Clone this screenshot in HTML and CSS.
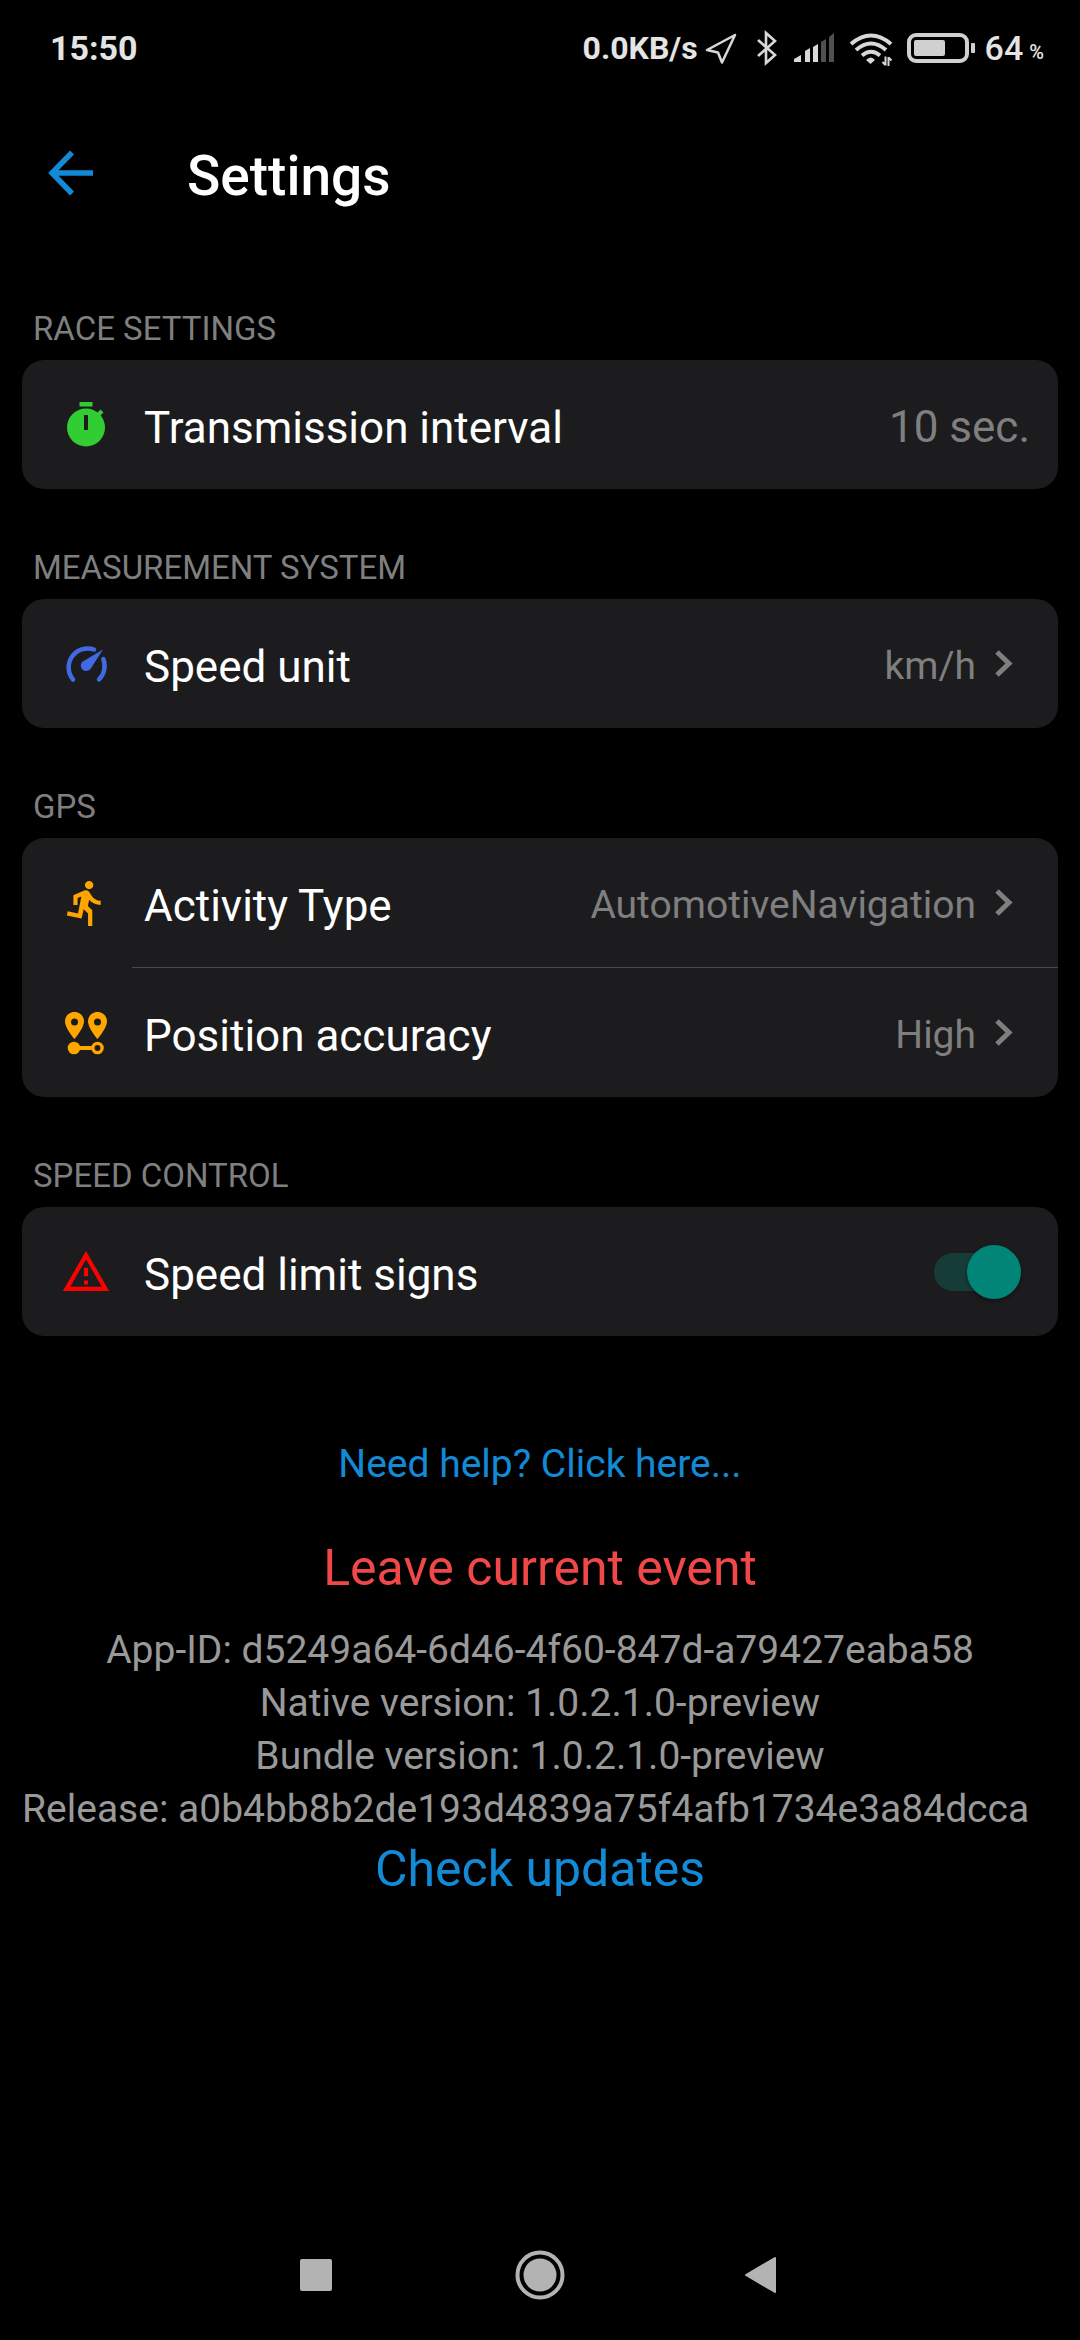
FILE: index.html
```html
<!DOCTYPE html>
<html lang="en">
<head>
<meta charset="utf-8">
<meta name="viewport" content="width=device-width, initial-scale=1">
<title>Settings</title>
<link rel="stylesheet" href="styles.css">
</head>
<body>
<div class="status-bar">
  <span class="status-time">15:50</span>
  <div class="status-icons">
    <span class="status-speed">0.0KB/s</span>
    <svg class="status-icon" width="34" height="36" viewBox="0 0 34 36" aria-hidden="true"><path d="M31 5 3 20l11 2.500 4 10z" fill="none" stroke="#d8d8d8" stroke-width="2.500" stroke-linejoin="round"/></svg>
    <svg class="status-icon bluetooth" width="24" height="36" viewBox="0 0 24 36" aria-hidden="true"><path d="M3 10l17 15-9 8V3l9 8L3 26" fill="none" stroke="#d8d8d8" stroke-width="2.600"/></svg>
    <svg class="status-icon" width="42" height="36" viewBox="0 0 42 36" aria-hidden="true"><path fill="#d8d8d8" d="M1 32v-3l7-4v7zM12 32V21l5-3v14zM20 32V17l5-3v18z"/><path fill="#505050" d="M28 32V12l5-3v23zM36 32V7l5-4v29z"/></svg>
    <svg class="status-icon" width="44" height="36" viewBox="0 0 44 36" aria-hidden="true"><g fill="none" stroke="#d8d8d8" stroke-width="4"><path d="M2 14Q22-3 42 14"/><path d="M7 20Q22 7 37 20"/><path d="M13 25.500Q22 18 31 25.500"/></g><path fill="#d8d8d8" d="M17 30q5-5 9 0l-4.500 4z"/><path d="M36.500 26.500v9M33.500 32l3 3M39.500 36v-9M39.500 27.500l3 3" fill="none" stroke="#d8d8d8" stroke-width="2"/></svg>
    <svg class="status-icon battery" width="70" height="36" viewBox="0 0 70 36" aria-hidden="true"><rect x="2" y="5" width="58" height="26" rx="7" fill="none" stroke="#d0d0d0" stroke-width="4"/><rect x="7" y="10" width="31" height="16" rx="2" fill="#d0d0d0"/><rect x="64" y="13" width="4" height="10" rx="1" fill="#d0d0d0"/></svg>
    <span class="status-charge">64</span>
    <span class="status-percent">%</span>
  </div>
</div>

<header class="app-bar">
  <button class="back-button" type="button" aria-label="Back">
    <svg width="48" height="48" viewBox="0 0 48 48" aria-hidden="true"><path d="M45 24H5M24 3.500 4 24l20 20.500" fill="none" stroke="#128ad6" stroke-width="5.500"/></svg>
  </button>
  <h1 class="app-title">Settings</h1>
</header>

<main class="content">
  <section class="group">
    <h2 class="group-title">RACE SETTINGS</h2>
    <div class="card">
      <div class="row">
        <svg class="row-icon" viewBox="0 0 48 48" aria-hidden="true"><g fill="#32cd32"><path d="M17.500 1h13v4.500h-13z"/><circle cx="24" cy="26.500" r="19"/></g><path d="M35 15l5-5" stroke="#32cd32" stroke-width="4"/><path d="M22 14h4v15h-4z" fill="#1c1c1e"/></svg>
        <span class="row-label">Transmission interval</span>
        <span class="row-value large">10 sec.</span>
      </div>
    </div>
  </section>

  <section class="group">
    <h2 class="group-title">MEASUREMENT SYSTEM</h2>
    <div class="card">
      <button class="row" type="button">
        <svg class="row-icon" viewBox="0 0 48 48" aria-hidden="true"><g fill="none" stroke="#4169e1" stroke-width="4.500" stroke-linecap="round"><path d="M11 39.500A19 19 0 0 1 32 9.500"/><path d="M41.300 19A19 19 0 0 1 37 39.500"/></g><path d="M41 9.500 28.500 29A5.500 5.500 0 1 1 20 22z" fill="#4169e1"/></svg>
        <span class="row-label">Speed unit</span>
        <span class="row-value">km/h</span>
        <svg class="chevron" viewBox="0 0 48 48" aria-hidden="true"><path d="M15 12l12 11.500L15 35" fill="none" stroke="#7f7f7f" stroke-width="5"/></svg>
      </button>
    </div>
  </section>

  <section class="group">
    <h2 class="group-title">GPS</h2>
    <div class="card">
      <button class="row" type="button">
        <svg class="row-icon" viewBox="0 0 48 48" aria-hidden="true"><path transform="translate(-1.200 -1.200) scale(2.100)" fill="#ffa500" d="M13.490 5.480c1.100 0 2-.9 2-2s-.9-2-2-2-2 .9-2 2 .9 2 2 2zm-3.600 13.900l1-4.400 2.100 2v6h2v-7.500l-2.100-2 .6-3c1.300 1.500 3.300 2.500 5.500 2.500v-2c-1.900 0-3.500-1-4.300-2.400l-1-1.600c-.4-.6-1-1-1.700-1-.3 0-.5.1-.8.1l-5.200 2.200v4.700h2v-3.400l1.800-.7-1.600 8.100-4.900-1-.4 2 7 1.400z"/></svg>
        <span class="row-label">Activity Type</span>
        <span class="row-value">AutomotiveNavigation</span>
        <svg class="chevron" viewBox="0 0 48 48" aria-hidden="true"><path d="M15 12l12 11.500L15 35" fill="none" stroke="#7f7f7f" stroke-width="5"/></svg>
      </button>
      <hr class="divider">
      <button class="row" type="button">
        <svg class="row-icon" viewBox="0 0 48 48" aria-hidden="true"><g fill="#ffa500" fill-rule="evenodd"><path d="M12.500 3C7 3 3 7.200 3 12.500 3 19 12.500 30 12.500 30S22 19 22 12.500C22 7.200 18 3 12.500 3zm0 6.500a3.500 3.500 0 1 1 0 7 3.500 3.500 0 0 1 0-7z"/><path d="M35.500 3C30 3 26 7.200 26 12.500 26 19 35.500 30 35.500 30S45 19 45 12.500C45 7.200 41 3 35.500 3zm0 6.500a3.500 3.500 0 1 1 0 7 3.500 3.500 0 0 1 0-7z"/></g><circle cx="12" cy="39" r="6.300" fill="#ffa500"/><path d="M12 39h19" stroke="#ffa500" stroke-width="4"/><circle cx="35.500" cy="39" r="4.600" fill="none" stroke="#ffa500" stroke-width="3.400"/></svg>
        <span class="row-label">Position accuracy</span>
        <span class="row-value">High</span>
        <svg class="chevron" viewBox="0 0 48 48" aria-hidden="true"><path d="M15 12l12 11.500L15 35" fill="none" stroke="#7f7f7f" stroke-width="5"/></svg>
      </button>
    </div>
  </section>

  <section class="group">
    <h2 class="group-title">SPEED CONTROL</h2>
    <div class="card">
      <div class="row">
        <svg class="row-icon" viewBox="0 0 48 48" aria-hidden="true"><path transform="translate(-1.200 -1.200) scale(2.100)" fill="#ff0000" d="M12 5.990L19.530 19H4.470L12 5.990M12 2L1 21h22L12 2zm1 14h-2v2h2v-2zm0-6h-2v4h2v-4z"/></svg>
        <label class="row-label" for="limit-signs">Speed limit signs</label>
        <input class="switch" type="checkbox" id="limit-signs" checked>
      </div>
    </div>
  </section>

  <footer class="about">
    <a class="help-link" href="#help">Need help? Click here...</a>
    <button class="action danger" type="button">Leave current event</button>
    <div class="versions">
      <p>App-ID: d5249a64-6d46-4f60-847d-a79427eaba58</p>
      <p>Native version: 1.0.2.1.0-preview</p>
      <p>Bundle version: 1.0.2.1.0-preview</p>
      <p class="release">Release: a0b4bb8b2de193d4839a75f4afb1734e3a84dcca</p>
    </div>
    <button class="action" type="button">Check updates</button>
  </footer>
</main>

<nav class="nav-bar" aria-label="System">
  <button class="nav-button" type="button" aria-label="Recent apps"><svg width="56" height="56" viewBox="0 0 56 56" aria-hidden="true"><rect x="12" y="12" width="32" height="32" rx="2" fill="#b3b3b3"/></svg></button>
  <button class="nav-button" type="button" aria-label="Home"><svg width="56" height="56" viewBox="0 0 56 56" aria-hidden="true"><circle cx="28" cy="28" r="22.500" fill="none" stroke="#b3b3b3" stroke-width="4"/><circle cx="28" cy="28" r="16.500" fill="#b3b3b3"/></svg></button>
  <button class="nav-button" type="button" aria-label="Back"><svg width="56" height="56" viewBox="0 0 56 56" aria-hidden="true"><path d="M10 28 39 11v34z" fill="#b3b3b3" stroke="#b3b3b3" stroke-width="2" stroke-linejoin="round"/></svg></button>
</nav>
</body>
</html>
```
FILE: styles.css
```css
* {
  box-sizing: border-box;
}

body {
  margin: 0;
  min-height: 100vh;
  display: flex;
  flex-direction: column;
  background: #000;
  color: #fff;
  font-family: Roboto, "Liberation Sans", sans-serif;
}

h1,
h2,
p {
  margin: 0;
}

button {
  margin: 0;
  padding: 0;
  border: 0;
  background: none;
  color: inherit;
  font: inherit;
  cursor: pointer;
}

svg {
  display: block;
  flex: none;
}

/* Status bar */

.status-bar {
  display: flex;
  align-items: center;
  justify-content: space-between;
  height: 96px;
  padding: 0 36px 0 50px;
  color: #e4e4e4;
  font-size: 34px;
  font-weight: 500;
  line-height: 40px;
}

.status-time {
  font-weight: 700;
}

.status-icons {
  display: flex;
  align-items: center;
}

.status-speed {
  margin-right: 6px;
  font-size: 32px;
  font-weight: 700;
}

.status-icon {
  margin-right: 14px;
}

.bluetooth {
  margin-left: 3px;
}

.battery {
  margin-right: 8px;
}

.status-percent {
  margin-left: 6px;
  padding-top: 8px;
  font-size: 20px;
}

/* App bar */

.app-bar {
  display: flex;
  align-items: center;
  gap: 91px;
  height: 154px;
  padding: 0 48px;
}

.app-title {
  padding-top: 6px;
  font-size: 55px;
  font-weight: 500;
  line-height: 64px;
}

/* Setting groups */

.content {
  padding: 0 22px;
}

.group {
  padding-top: 59px;
}

.group-title {
  margin-bottom: 11px;
  padding-left: 11px;
  color: #7f7f7f;
  font-size: 33px;
  font-weight: 400;
  line-height: 40px;
}

.card {
  border-radius: 22px;
  background: #1c1c1e;
}

.row {
  display: flex;
  align-items: center;
  width: 100%;
  height: 129px;
  padding: 0 28px 0 40px;
  text-align: left;
}

.row-icon {
  width: 48px;
  height: 48px;
  margin-right: 34px;
}

.row-label {
  flex: 1;
  padding-top: 6px;
  font-size: 44px;
  line-height: 52px;
}

.row-value {
  padding-top: 4px;
  color: #7f7f7f;
  font-size: 39px;
  line-height: 52px;
}

.row-value.large {
  font-size: 44px;
}

.chevron {
  width: 48px;
  height: 48px;
  margin-left: 6px;
}

.divider {
  height: 1px;
  margin: 0 0 0 110px;
  border: 0;
  background: #4a4a4c;
}

.switch {
  position: relative;
  width: 88px;
  height: 56px;
  margin: 0 8px 0 0;
  appearance: none;
  cursor: pointer;
}

.switch::before {
  content: "";
  position: absolute;
  inset: 9px 7px 9px 0;
  border-radius: 19px;
  background: #4a4a4c;
}

.switch::after {
  content: "";
  position: absolute;
  top: 1px;
  left: 0;
  width: 54px;
  height: 54px;
  border-radius: 50%;
  background: #b9b9b9;
  box-shadow: 0 2px 4px rgba(0, 0, 0, 0.4);
}

.switch:checked::before {
  background: #163c39;
}

.switch:checked::after {
  left: 33px;
  background: #008577;
}

/* About */

.about {
  display: flex;
  flex-direction: column;
  align-items: center;
  padding-top: 102px;
  color: #999;
  font-size: 39px;
  line-height: 53px;
  text-align: center;
}

.help-link {
  color: #128ad6;
  text-decoration: none;
}

.action {
  color: #128ad6;
  font-size: 50px;
  line-height: 60px;
}

.danger {
  margin: 47px 0 26px;
  color: #f04848;
}

.versions {
  width: 100%;
  margin-bottom: 3px;
}

.release {
  text-align: left;
}

/* System navigation */

.nav-bar {
  display: flex;
  justify-content: center;
  margin-top: auto;
}

.nav-button {
  display: flex;
  align-items: center;
  justify-content: center;
  width: 224px;
  height: 130px;
}
```
